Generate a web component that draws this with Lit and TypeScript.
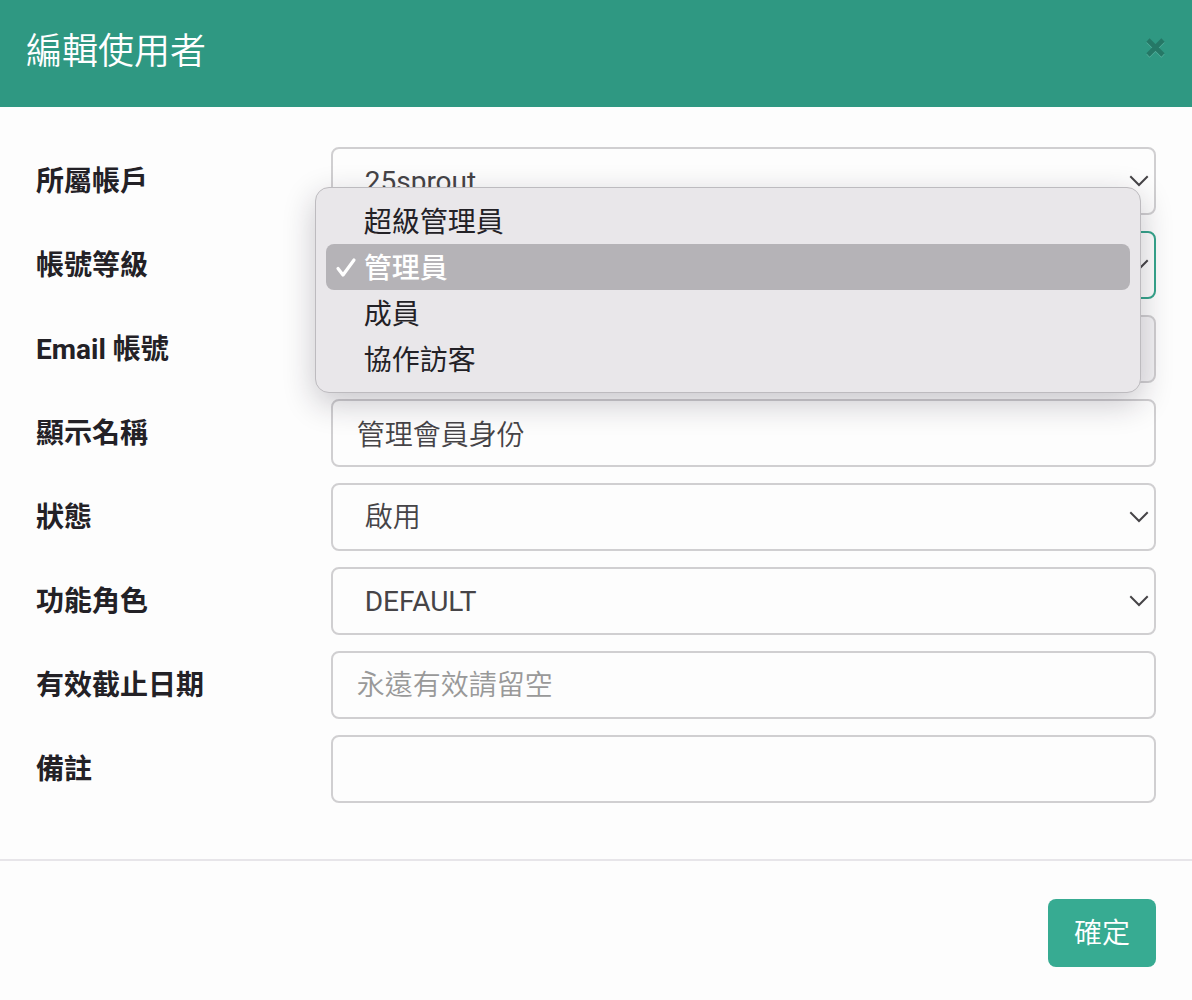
import { LitElement, html, css, svg } from "lit";
import { customElement, state } from "lit/decorators.js";
import { classMap } from "lit/directives/class-map.js";

const LEVELS = ["超級管理員", "管理員", "成員", "協作訪客"];

const chevron = html`<svg class="chevron" viewBox="0 0 20 12" aria-hidden="true">
  ${svg`<path d="M2 2 L10 10 L18 2" fill="none" stroke="currentColor" stroke-width="2" stroke-linecap="square" />`}
</svg>`;

@customElement("app-root")
export class AppRoot extends LitElement {
  @state() private level = "管理員";
  @state() private open = true;

  static styles = css`
    :host {
      display: block;
      min-height: 100vh;
      background: #fdfdfd;
      color: #232126;
      font-family: Roboto, "Noto Sans CJK TC", sans-serif;
      font-size: 28px;
      line-height: 40px;
    }
    * {
      box-sizing: border-box;
    }
    .header {
      display: flex;
      justify-content: space-between;
      align-items: flex-start;
      padding: 24px 26px;
      background: #2f9882;
      color: #fff;
    }
    .title {
      margin: 0;
      padding: 1px 0 4px;
      font-size: 36px;
      line-height: 54px;
      font-weight: 350;
    }
    .close {
      display: flex;
      padding: 12px 0;
      border: 0;
      background: none;
      color: #257866;
      cursor: pointer;
    }
    .close svg {
      width: 22px;
      height: 22px;
    }
    .body {
      display: flex;
      flex-direction: column;
      gap: 16px;
      padding: 40px 36px 56px;
    }
    .row {
      display: grid;
      grid-template-columns: minmax(0, 5fr) minmax(0, 14fr);
      align-items: center;
    }
    .label {
      padding-top: 2px;
      font-weight: 700;
    }
    .field {
      position: relative;
      display: flex;
    }
    .control {
      flex: 1;
      min-width: 0;
      height: 68px;
      margin: 0;
      padding: 0 24px;
      border: 2px solid #d0cfd1;
      border-radius: 8px;
      outline: none;
      background: #fdfdfd;
      color: #464447;
      font: inherit;
      font-weight: 350;
      appearance: none;
    }
    .control::placeholder {
      color: #999;
      opacity: 1;
    }
    .control:disabled {
      background: #f4f3f5;
      opacity: 1;
    }
    .select {
      padding: 2px 48px 0 32px;
    }
    .latin {
      font-weight: 400;
    }
    .active {
      border-color: #35a58c;
    }
    .chevron {
      position: absolute;
      top: 28px;
      right: 7px;
      width: 20px;
      height: 12px;
      color: #464447;
      pointer-events: none;
    }
    .menu {
      position: absolute;
      z-index: 1;
      top: -44px;
      left: -16px;
      right: 15px;
      display: flex;
      flex-direction: column;
      padding: 10px;
      border: 1px solid #bdbbbf;
      border-radius: 14px;
      background: #e9e7ea;
      box-shadow: 0 10px 32px rgba(30, 20, 40, 0.24);
    }
    .option {
      display: flex;
      align-items: center;
      height: 46px;
      padding: 0 8px;
      border: 0;
      border-radius: 8px;
      background: none;
      color: #232126;
      font: inherit;
      text-align: left;
    }
    .option.selected {
      background: #b5b3b7;
      color: #fff;
      font-weight: 500;
    }
    .name {
      padding-top: 4px;
    }
    .check {
      width: 24px;
      height: 24px;
      margin-right: 6px;
      visibility: hidden;
    }
    .selected .check {
      visibility: visible;
    }
    .footer {
      display: flex;
      justify-content: flex-end;
      padding: 38px 36px 33px;
      border-top: 2px solid #e7e5e9;
    }
    .submit {
      height: 68px;
      padding: 2px 26px 0;
      border: 0;
      border-radius: 8px;
      background: #37ab92;
      color: #fff;
      font: inherit;
      font-weight: 350;
      cursor: pointer;
    }
  `;

  private choose(name: string) {
    this.level = name;
    this.open = false;
  }

  private toggle(e: Event) {
    e.preventDefault();
    this.open = !this.open;
  }

  private selectRow(id: string, label: string, value: string) {
    const latin = /^[\x20-\x7e]+$/.test(value);
    return html`<div class="row">
      <label class="label" for=${id}>${label}</label>
      <div class="field">
        <select class=${classMap({ control: true, select: true, latin })} id=${id}>
          <option>${value}</option>
        </select>
        ${chevron}
      </div>
    </div>`;
  }

  private inputRow(id: string, label: string, value = "", placeholder = "", disabled = false) {
    return html`<div class="row">
      <label class="label" for=${id}>${label}</label>
      <div class="field">
        <input class="control" id=${id} .value=${value} placeholder=${placeholder} ?disabled=${disabled} />
      </div>
    </div>`;
  }

  private menu() {
    return html`<div class="menu" role="listbox" aria-label="帳號等級">
      ${LEVELS.map((name) => {
        const selected = name === this.level;
        return html`<button
          type="button"
          role="option"
          aria-selected=${selected}
          class=${classMap({ option: true, selected })}
          @click=${() => this.choose(name)}
        >
          <svg class="check" viewBox="0 0 24 24" aria-hidden="true">
            <path d="M4 13.5 L9 20 L20 5" fill="none" stroke="currentColor" stroke-width="3.2" stroke-linecap="round" stroke-linejoin="round" />
          </svg>
          <span class="name">${name}</span>
        </button>`;
      })}
    </div>`;
  }

  render() {
    return html`
      <header class="header">
        <h1 class="title">編輯使用者</h1>
        <button class="close" type="button" aria-label="關閉">
          <svg viewBox="0 0 22 22" aria-hidden="true">
            <path d="M4 5 L19 20 M19 5 L4 20" stroke="#55ae9b" stroke-width="4.6" />
            <path d="M4 4 L19 19 M19 4 L4 19" stroke="currentColor" stroke-width="4.6" />
          </svg>
        </button>
      </header>
      <form @submit=${(e: Event) => e.preventDefault()}>
        <div class="body">
          ${this.selectRow("account", "所屬帳戶", "25sprout")}
          <div class="row">
            <label class="label" for="level">帳號等級</label>
            <div class="field">
              <select class="control select active" id="level" .value=${this.level} @mousedown=${this.toggle}>
                ${LEVELS.map((name) => html`<option ?selected=${name === this.level}>${name}</option>`)}
              </select>
              ${chevron} ${this.open ? this.menu() : ""}
            </div>
          </div>
          ${this.inputRow("email", "Email 帳號", "", "", true)}
          ${this.inputRow("name", "顯示名稱", "管理會員身份")}
          ${this.selectRow("status", "狀態", "啟用")}
          ${this.selectRow("role", "功能角色", "DEFAULT")}
          ${this.inputRow("expiry", "有效截止日期", "", "永遠有效請留空")}
          ${this.inputRow("note", "備註")}
        </div>
        <footer class="footer">
          <button class="submit" type="submit">確定</button>
        </footer>
      </form>
    `;
  }
}
